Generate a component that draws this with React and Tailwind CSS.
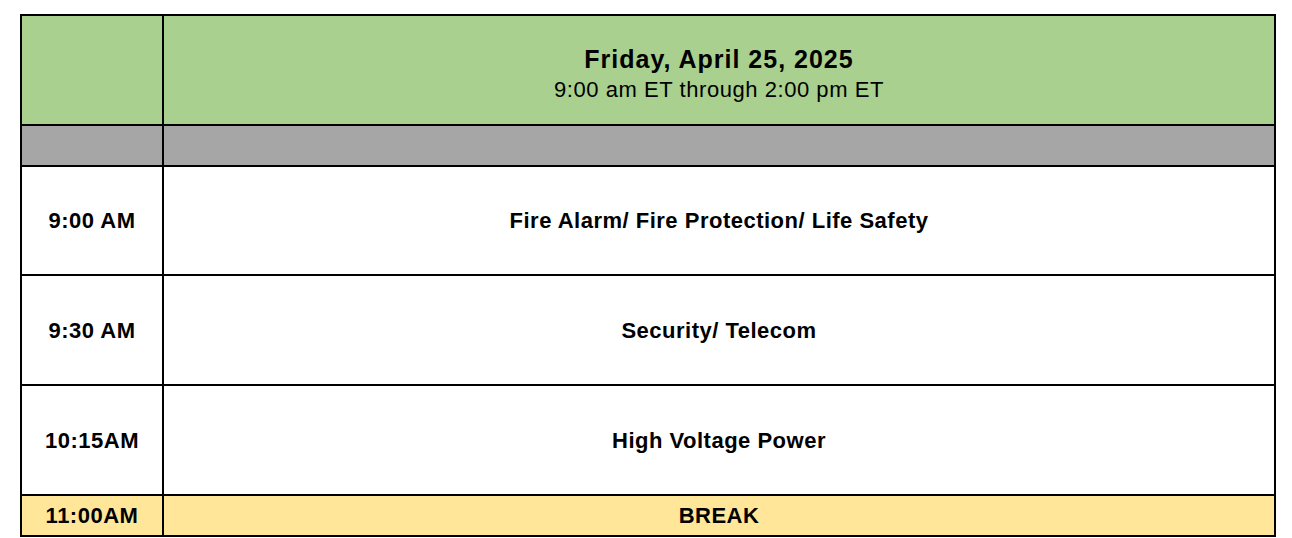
import React from 'react'

const rows = [
    { time: '9:00 AM', title: 'Fire Alarm/ Fire Protection/ Life Safety', h: 'h-[109px]' },
    { time: '9:30 AM', title: 'Security/ Telecom', h: 'h-[110px]' },
    { time: '10:15AM', title: 'High Voltage Power', h: 'h-[110px]' },
]

export default function App() {
    return (
        <div className="w-[1292px] h-[538px] bg-white overflow-hidden" style={{ fontFamily: '"Liberation Sans", Arial, sans-serif' }}>
            <div className="ml-[20px] mt-[14px] w-[1256px] border-t-2 border-l-2 border-black text-black">
                <div className="flex h-[110px] bg-[#a9d08e]">
                    <div className="w-[142px] border-r-2 border-b-2 border-black" />
                    <div className="w-[1112px] border-r-2 border-b-2 border-black flex flex-col items-center justify-center pt-[8px]">
                        <div className="text-[25px] font-bold leading-[28px] tracking-[1px]">Friday, April 25, 2025</div>
                        <div className="mt-[4px] text-[22px] leading-[26px] tracking-[0.55px]">9:00 am ET through 2:00 pm ET</div>
                    </div>
                </div>
                <div className="flex h-[41px] bg-[#a6a6a6]">
                    <div className="w-[142px] border-r-2 border-b-2 border-black" />
                    <div className="w-[1112px] border-r-2 border-b-2 border-black" />
                </div>
                {rows.map((r) => (
                    <div key={r.time} className={`flex ${r.h} bg-white font-bold text-[22px] tracking-[0.5px]`}>
                        <div className="w-[142px] border-r-2 border-b-2 border-black flex items-center justify-center">{r.time}</div>
                        <div className="w-[1112px] border-r-2 border-b-2 border-black flex items-center justify-center">{r.title}</div>
                    </div>
                ))}
                <div className="flex h-[41px] bg-[#ffe699] font-bold text-[22px] tracking-[0.5px]">
                    <div className="w-[142px] border-r-2 border-b-2 border-black flex items-center justify-center">11:00AM</div>
                    <div className="w-[1112px] border-r-2 border-b-2 border-black flex items-center justify-center">BREAK</div>
                </div>
            </div>
        </div>
    )
}
